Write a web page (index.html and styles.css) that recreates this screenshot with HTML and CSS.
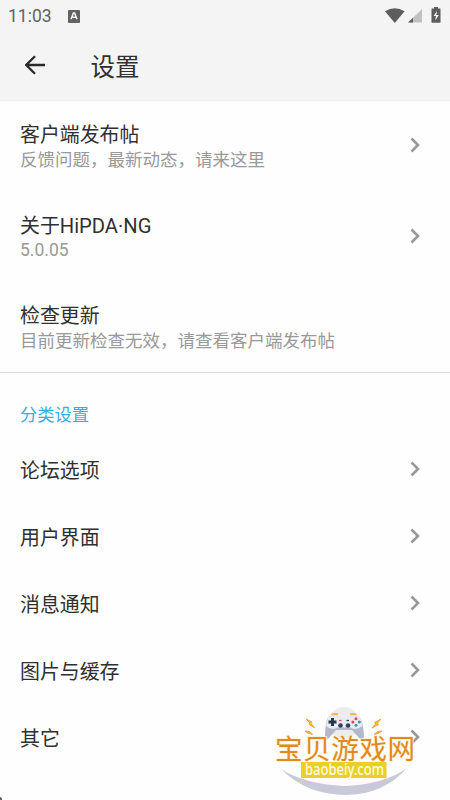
FILE: index.html
```html
<!DOCTYPE html>
<html lang="zh-CN">
<head>
<meta charset="utf-8">
<title>设置</title>
<link rel="stylesheet" href="styles.css">
</head>
<body>
<header class="header">
  <div class="status">
    <span class="time">11:03</span>
    <svg class="app-icon" width="12" height="13" viewBox="0 0 12 13"><rect width="12" height="13" rx="1" fill="#626262"/><path d="M3 9.3 5.4 3h1.2L9 9.3M4 7.3h4" fill="none" stroke="#f4f4f4" stroke-width="1.5"/></svg>
    <svg class="signals" width="58" height="18" viewBox="0 0 58 18"><path d="M0 4.2Q9.8-1.8 19.6 4.2L9.8 16Z" fill="#5d5d5d"/><path d="M23 15.500 37 2v13.500Z" fill="#c1c1c1"/><path d="M23 15.500 28 10.700v4.800Z" fill="#5d5d5d"/><path d="M49 0h4v1.500h2.500v14.200h-9V1.500H49Z" fill="#5d5d5d"/><path d="m52 4-3.400 5H51l-.8 4.500L53.800 8h-2.400Z" fill="#fff"/></svg>
  </div>
  <div class="toolbar">
    <svg class="back" width="22" height="20" viewBox="0 0 22 20"><path d="M10 1.200 1.200 10l8.800 8.800M1.200 10H20" fill="none" stroke="#292929" stroke-width="2.300"/></svg>
    <h1>设置</h1>
  </div>
</header>
<main>
  <section class="about">
    <div class="item"><div><div class="name">客户端发布帖</div><div class="summary">反馈问题，最新动态，请来这里</div></div><svg class="chevron" viewBox="0 0 10 16"><path d="m1.500 1.500 6.500 6.500-6.500 6.500"/></svg></div>
    <div class="item"><div class="product"><div class="name">关于<span class="latin">HiPDA·NG</span></div><div class="summary version">5.0.05</div></div><svg class="chevron" viewBox="0 0 10 16"><path d="m1.500 1.500 6.500 6.500-6.500 6.500"/></svg></div>
    <div class="item"><div><div class="name">检查更新</div><div class="summary">目前更新检查无效，请查看客户端发布帖</div></div></div>
  </section>
  <section class="categories">
    <h2>分类设置</h2>
    <div class="row"><span class="name">论坛选项</span><svg class="chevron" viewBox="0 0 10 16"><path d="m1.500 1.500 6.500 6.500-6.500 6.500"/></svg></div>
    <div class="row"><span class="name">用户界面</span><svg class="chevron" viewBox="0 0 10 16"><path d="m1.500 1.500 6.500 6.500-6.500 6.500"/></svg></div>
    <div class="row"><span class="name">消息通知</span><svg class="chevron" viewBox="0 0 10 16"><path d="m1.500 1.500 6.500 6.500-6.500 6.500"/></svg></div>
    <div class="row"><span class="name">图片与缓存</span><svg class="chevron" viewBox="0 0 10 16"><path d="m1.500 1.500 6.500 6.500-6.500 6.500"/></svg></div>
    <div class="row"><span class="name">其它</span><svg class="chevron" viewBox="0 0 10 16"><path d="m1.500 1.500 6.500 6.500-6.500 6.500"/></svg></div>
  </section>
</main>
<svg class="watermark" width="185" height="100" viewBox="0 0 185 100">
  <circle cx="79" cy="23" r="16" fill="#ededee"/>
  <path d="M16 69Q39 84 80 86Q120 84 142 68Q118 95 81 95Q42 95 16 69Z" fill="#c9cad9"/>
  <path d="M67 15q1-1.500 6-.8M85 14.200q5-.7 6 .8" fill="none" stroke="#eeb64d" stroke-width="2"/>
  <path d="M63 17Q68 14.500 73 17H85Q90 14.500 95.500 18Q99 27 99 37Q98 41 94 38L87 30H71L64 38Q60 41 60 36Q60 24 63 17Z" fill="#b5b8ca"/>
  <path d="M63 17Q68 14.500 73 17H85Q90 14.500 95.500 18L97.500 26Q91 31 85 27.500H73Q67 31 61 26Z" fill="#e9eaf2"/>
  <path d="M67.500 18v8M63.500 22h8" stroke="#28384d" stroke-width="3"/>
  <circle cx="75.500" cy="25.500" r="2.300" fill="#354055"/><circle cx="83" cy="25.500" r="2.300" fill="#354055"/>
  <path d="M74 20.500h2.500" stroke="#e54d58" stroke-width="1.300"/><path d="M81.500 20.500h2.500" stroke="#354055" stroke-width="1.300"/>
  <circle cx="91" cy="18.700" r="1.500" fill="#dd4655"/><circle cx="87.800" cy="22" r="1.500" fill="#dd4655"/><circle cx="94.300" cy="22" r="1.500" fill="#3698aa"/><circle cx="91" cy="25.200" r="1.500" fill="#3698aa"/>
  <path d="m41 19 6 3-1 1.500 4 4.500-6-3.500 1-1.500ZM40 31l5 .5 2.500 3-5-1.500ZM116 19l-6.500 3.500 1 1.500-3.500 4 6.500-3.500-1-1.500ZM117 31l-4.500.5-3.500 3 5-1.500Z" fill="#f6b637" stroke="#f3a73a" stroke-width="1"/>
  <text class="brand-edge brand" x="10" y="58.500" textLength="140">宝贝游戏网</text>
  <rect x="36" y="62" width="85.500" height="16" fill="#ebcf27"/>
  <text class="domain" x="40" y="75" textLength="79" lengthAdjust="spacingAndGlyphs">baobeiy.com</text>
</svg>
<div class="corner"></div>
</body>
</html>
```
FILE: styles.css
```css
* { box-sizing: border-box; }
body {
  margin: 0;
  position: relative;
  height: 800px;
  overflow: hidden;
  background: #fefefe;
  color: #303030;
  font-family: "Noto Sans CJK SC", sans-serif;
}
.header { height: 100px; background: #f4f4f4; box-shadow: 0 1px 1px #eee; }
.status { display: flex; height: 32px; align-items: center; padding: 0 8px; }
.time { width: 60px; font: 17.5px/32px Roboto, sans-serif; color: #626262; }
.signals { margin-left: auto; margin-right: -1px; }
.toolbar { display: flex; height: 68px; align-items: center; padding-left: 25px; }
.back { margin-top: -2px; }
h1 { margin: 0 0 0 43.5px; font-size: 24.5px; line-height: 34px; font-weight: 400; }
.about { height: 273px; border-bottom: 1px solid #dcdcdc; }
.item, .row {
  display: flex;
  align-items: center;
  justify-content: space-between;
  padding: 0 30px 0 20px;
}
.item { height: 90.5px; }
.name { padding-top: 2px; font-size: 19.9px; line-height: 26px; }
.latin { font-family: Roboto, sans-serif; font-size: 20.2px; line-height: 1; }
.summary { margin-top: -1px; font-size: 17.5px; line-height: 25px; color: #999; }
.summary.version { margin-top: 0; font-family: Roboto, sans-serif; }
.chevron { width: 10px; height: 16px; overflow: visible; fill: none; stroke: #999; stroke-width: 2.6; }
.product { padding-top: 1px; }
h2 { margin: 0; height: 63px; padding: 27px 20px 0; font-size: 17.3px; line-height: 27px; font-weight: 400; color: #37aede; }
.row { height: 66.9px; }
.watermark { position: absolute; left: 265px; top: 700px; }
.brand { font-size: 27.5px; font-weight: 400; fill: #e28a21; }
.brand-edge { stroke: #fff3d6; stroke-width: 1.5px; paint-order: stroke; }
.domain { font: 500 15.5px "Noto Sans", sans-serif; fill: #fffbe0; }
.corner { position: absolute; left: 0; bottom: 0; width: 2px; height: 3px; background: #666; border-top-right-radius: 2px; }
```
